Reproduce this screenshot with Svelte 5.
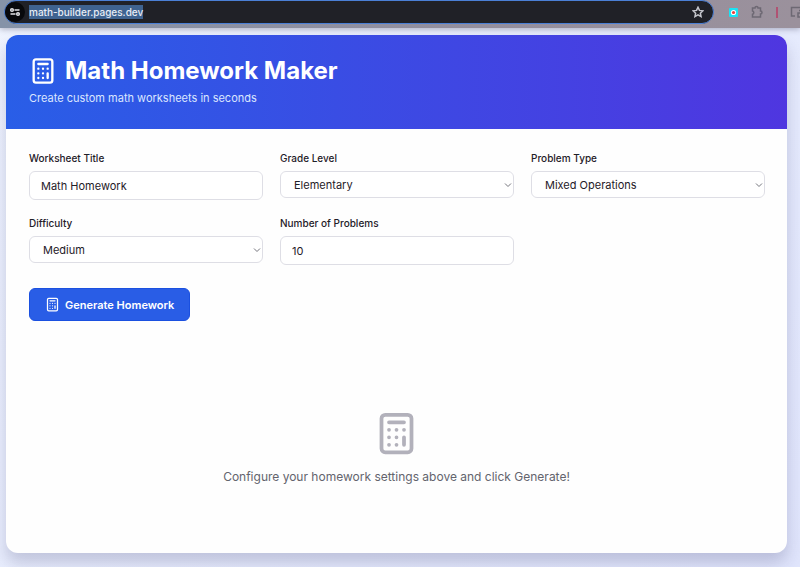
<script lang="ts">
	let title = 'Math Homework';
	let grade = 'Elementary';
	let problemType = 'Mixed Operations';
	let difficulty = 'Medium';
	let count = 10;
	let address = 'math-builder.pages.dev';

	const grades = ['Elementary', 'Middle School', 'High School'];
	const problemTypes = ['Mixed Operations', 'Addition', 'Subtraction', 'Multiplication', 'Division'];
	const difficulties = ['Easy', 'Medium', 'Hard'];
</script>

{#snippet calculator()}
	<svg class="calculator" viewBox="0 0 24 24" aria-hidden="true">
		<rect width="16" height="20" x="4" y="2" rx="2" />
		<path d="M8 6h8M16 14v4M16 10h.01M12 10h.01M8 10h.01M12 14h.01M8 14h.01M12 18h.01M8 18h.01" />
	</svg>
{/snippet}

<div class="browser-bar">
	<div class="omnibox">
		<button class="site-info" aria-label="View site information">
			<svg width="12" height="12" viewBox="0 0 12 12">
				<circle cx="3" cy="4" r="1.3" />
				<path d="M5.5 4h5M1.500 8h5" />
				<circle cx="9" cy="8" r="1.3" />
			</svg>
		</button>
		<div class="address"><span>{address}</span></div>
		<button class="bookmark" aria-label="Bookmark this tab">
			<svg width="12" height="12" viewBox="0 0 24 24">
				<path d="m12 2.500 2.900 6.300 6.900.8-5.100 4.700 1.400 6.800-6.100-3.400-6.100 3.400 1.400-6.800-5.100-4.700 6.900-.8z" />
			</svg>
		</button>
	</div>
	<div class="extensions">
		<button class="app-icon" aria-label="Extension">
			<svg width="9" height="9" viewBox="0 0 9 9">
				<rect width="9" height="9" rx="1" fill="#19e3f5" />
				<circle cx="4.5" cy="4.5" r="2.6" fill="#fff" />
				<circle cx="4.5" cy="4.5" r="1.6" fill="#e8413c" />
			</svg>
		</button>
		<button aria-label="Extensions">
			<svg class="line-icon" width="14" height="14" viewBox="0 0 14 14">
				<path d="M2.500 3H5a1.500 1.500 0 0 1 3 0h2.500v3a1.500 1.500 0 0 1 0 3v3h-8V9.300a1.700 1.700 0 0 0 0-3.300z" />
			</svg>
		</button>
		<span class="divider"></span>
		<button aria-label="Side panel">
			<svg class="line-icon" width="16" height="12" viewBox="0 0 16 12">
				<path d="M5 10H1.500V1.500h13V5M9 4.500h3M8 7h7v4H8z" />
			</svg>
		</button>
	</div>
</div>

<main>
	<div class="card">
		<header>
			<h1>{@render calculator()}Math Homework Maker</h1>
			<p>Create custom math worksheets in seconds</p>
		</header>

		<form on:submit|preventDefault>
			<div class="fields">
				<div class="field">
					<label for="title">Worksheet Title</label>
					<input id="title" type="text" bind:value={title} />
				</div>
				<div class="field">
					<label for="grade">Grade Level</label>
					<div class="select">
						<select id="grade" bind:value={grade}>
							{#each grades as option}
								<option>{option}</option>
							{/each}
						</select>
						<svg viewBox="0 0 8 8"><path d="m1 2.500 3 3 3-3" /></svg>
					</div>
				</div>
				<div class="field">
					<label for="type">Problem Type</label>
					<div class="select">
						<select id="type" bind:value={problemType}>
							{#each problemTypes as option}
								<option>{option}</option>
							{/each}
						</select>
						<svg viewBox="0 0 8 8"><path d="m1 2.500 3 3 3-3" /></svg>
					</div>
				</div>
				<div class="field">
					<label for="difficulty">Difficulty</label>
					<div class="select">
						<select id="difficulty" bind:value={difficulty}>
							{#each difficulties as option}
								<option>{option}</option>
							{/each}
						</select>
						<svg viewBox="0 0 8 8"><path d="m1 2.500 3 3 3-3" /></svg>
					</div>
				</div>
				<div class="field">
					<label for="count">Number of Problems</label>
					<input id="count" type="number" min="1" max="50" bind:value={count} />
				</div>
			</div>
			<button class="generate" type="submit">{@render calculator()}Generate Homework</button>
		</form>

		<div class="empty">
			{@render calculator()}
			<p>Configure your homework settings above and click Generate!</p>
		</div>
	</div>
</main>

<style>
	:global(body) {
		margin: 0;
		min-height: 100vh;
		background: linear-gradient(135deg, #eff4ff, #e0e5fc);
		font-family: Inter, 'Liberation Sans', sans-serif;
		color: #1f2028;
	}

	button,
	input,
	select {
		font-family: inherit;
	}

	svg {
		display: block;
		flex: none;
	}

	.calculator {
		fill: none;
		stroke: currentColor;
		stroke-width: 2;
		stroke-linecap: round;
		stroke-linejoin: round;
	}

	.browser-bar {
		display: flex;
		align-items: flex-start;
		height: 28px;
		box-sizing: border-box;
		padding-left: 4px;
		overflow: hidden;
		background: linear-gradient(90deg, #8593a8, #938e9d 60%, #9b919c);
		box-shadow: 0 1px 6px rgba(60, 60, 85, 0.4);
	}

	.browser-bar button {
		display: grid;
		place-items: center;
		flex: none;
		padding: 0;
		border: none;
		background: none;
	}

	.omnibox {
		display: flex;
		align-items: center;
		flex: 1;
		height: 24px;
		box-sizing: border-box;
		border: 1px solid #4b80d6;
		border-radius: 12px;
		background: #202127;
	}

	.browser-bar .site-info {
		width: 20px;
		height: 20px;
		border-radius: 50%;
		background: #08090c;
	}

	.site-info svg {
		fill: none;
		stroke: #e4e5e9;
		stroke-width: 1.5;
	}

	.address {
		flex: 1;
		padding-left: 4px;
		font-size: 10px;
		line-height: 14px;
		font-weight: 500;
		color: #e8edf5;
	}

	.address span {
		display: inline-block;
		background: #3f6390;
	}

	.browser-bar .bookmark {
		width: 30px;
		height: 20px;
	}

	.bookmark svg {
		fill: none;
		stroke: #c5c6cc;
		stroke-width: 3;
	}

	.extensions {
		display: flex;
		align-items: center;
		gap: 12px;
		width: 86px;
		height: 24px;
		box-sizing: border-box;
		padding-left: 15px;
	}

	.line-icon {
		fill: none;
		stroke: #6d6873;
		stroke-width: 1.5;
	}

	.divider {
		flex: none;
		width: 2px;
		height: 11px;
		background: #b05373;
	}

	main {
		padding: 7px 13px 14px 6px;
	}

	.card {
		overflow: hidden;
		border-radius: 12px;
		background: #fefefe;
		box-shadow: 0 10px 16px rgba(50, 50, 100, 0.22);
	}

	header {
		padding: 20px 23px 23px;
		background: linear-gradient(90deg, #295ee7, #4f36e0);
		color: #fff;
	}

	h1 {
		display: flex;
		align-items: center;
		gap: 8px;
		margin: 0;
		font-size: 24px;
		line-height: 32px;
		font-weight: 700;
	}

	h1 .calculator {
		width: 28px;
		height: 28px;
	}

	header p {
		margin: 4px 0 0;
		font-size: 11px;
		line-height: 15px;
		color: #dbe6ff;
	}

	form {
		padding: 23px 22px 0 23px;
	}

	.fields {
		display: grid;
		grid-template-columns: repeat(3, 1fr);
		gap: 17px;
	}

	.field label {
		display: block;
		margin-bottom: 6px;
		font-size: 10px;
		line-height: 13px;
		font-weight: 500;
	}

	.field input,
	.field select {
		display: block;
		width: 100%;
		box-sizing: border-box;
		border: 1px solid #dedee5;
		border-radius: 6px;
		background: #fff;
		color: #1f2028;
		font-size: 11px;
	}

	.field input {
		height: 29px;
		padding: 0 11px;
	}

	.field select {
		height: 27px;
		padding: 0 24px 0 13px;
		appearance: none;
	}

	.select {
		position: relative;
	}

	.select svg {
		position: absolute;
		top: 10px;
		right: 2px;
		width: 8px;
		height: 8px;
		fill: none;
		stroke: #74757d;
		pointer-events: none;
	}

	.generate {
		display: flex;
		align-items: center;
		gap: 5px;
		height: 33px;
		margin-top: 23px;
		padding: 0 15px;
		border: 1px solid #1b50e0;
		border-radius: 6px;
		background: #295de6;
		color: #fff;
		font-size: 11px;
		font-weight: 600;
	}

	.generate .calculator {
		width: 15px;
		height: 15px;
	}

	.empty {
		display: flex;
		flex-direction: column;
		align-items: center;
		gap: 12px;
		padding: 90px 23px 67px;
		color: #63646d;
	}

	.empty .calculator {
		width: 45px;
		height: 45px;
		color: #b2b1bb;
	}

	.empty p {
		margin: 0;
		font-size: 12px;
		line-height: 18px;
	}
</style>
